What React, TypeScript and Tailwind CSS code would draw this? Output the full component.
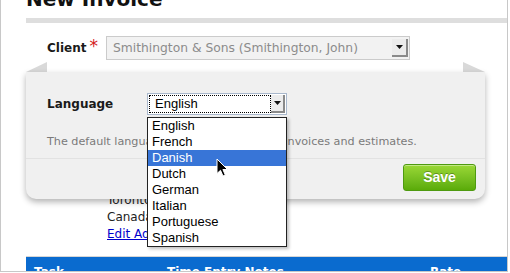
import React from "react";

const languages = ["English", "French", "Danish", "Dutch", "German", "Italian", "Portuguese", "Spanish"];

const SelectArrow = ({ className }: { className: string }) => (
  <div className={className}>
    <svg width="7" height="4" viewBox="0 0 7 4">
      <polygon points="0,0 7,0 3.5,4" fill="#111" />
    </svg>
  </div>
);

const Cursor = () => (
  <svg className="absolute left-[69px] top-[65px] z-30" width="13" height="20" viewBox="0 0 13 20">
    <path d="M1 1 L1 15.5 L4.5 12.3 L7 18 L9.3 17 L6.9 11.5 L11.5 11.5 Z" fill="#000" stroke="#fff" strokeWidth="1" strokeLinejoin="round" />
  </svg>
);

export default function App() {
  return (
    <div className="w-[510px] h-[273px] overflow-hidden bg-white font-['DejaVu_Sans',sans-serif]">
      <div className="relative w-[508px] h-[272px] overflow-hidden border-x border-b border-[#c8c8c8] pl-[25px]">
        <h1 className="mt-[-13px] text-[20px] leading-[24px] font-bold text-[#111]">New Invoice</h1>
        <div className="mt-[7px] h-[5px] bg-[#dedede]" />

        {/* client */}
        <div className="ml-[21px] mt-[13px] flex h-[24px] items-center">
          <div className="flex w-[59px] items-start">
            <span className="text-[12px] font-bold text-[#1a1a1a]">Client</span>
            <span className="ml-[3px] mt-[-1px] text-[17px] leading-[17px] text-[#d42020]">*</span>
          </div>
          <div className="flex h-[24px] w-[304px] items-center border border-[#cbcbcb] bg-[#f2f2f2] pl-[6px] text-[12.3px] text-[#8c8c8c]">
            <span>Smithington &amp; Sons (Smithington, John)</span>
            <SelectArrow className="ml-auto mr-[1px] flex h-[18px] w-[16px] items-center justify-center border-r-2 border-b-2 border-[#8a8a8a] bg-[#ececec]" />
          </div>
        </div>

        {/* folded corners */}
        <div className="mt-[2px] flex h-[10px] w-[459px] justify-between">
          <svg width="21" height="10" viewBox="0 0 21 10">
            <polygon points="0,10 21,0 21,10" fill="#d9d9d9" />
          </svg>
          <svg width="22" height="10" viewBox="0 0 22 10">
            <polygon points="0,0 22,10 0,10" fill="#d9d9d9" />
          </svg>
        </div>

        {/* settings panel */}
        <div className="relative z-10 w-[459px] rounded-b-[10px] bg-[#f0f0f0] shadow-[0_3px_6px_rgba(0,0,0,0.3)]">
          <div className="px-[21px] pt-[21px] pb-[9px]">
            <div className="flex items-center">
              <span className="w-[100px] text-[12px] font-bold text-[#1a1a1a]">Language</span>
              <div className="relative h-[22px] w-[140px]">
                <div className="flex h-[22px] items-center border border-[#a9b8cc] bg-white p-[1px]">
                  <div className="flex h-[18px] flex-1 items-center border border-dotted border-black pl-[5px] font-['Liberation_Sans',sans-serif] text-[13px] text-black">
                    English
                  </div>
                  <SelectArrow className="flex h-[18px] w-[14px] items-center justify-center border-r-2 border-b-2 border-[#8a8a8a] bg-[#ececec]" />
                </div>

                {/* open list */}
                <div className="absolute left-0 top-[24px] z-20 w-[140px] border border-[#222] bg-white shadow-[2px_2px_3px_rgba(0,0,0,0.25)] font-['Liberation_Sans',sans-serif] text-[13px]">
                  {languages.map((lang) => (
                    <div
                      key={lang}
                      className={
                        lang === "Danish"
                          ? "h-[16px] bg-[#3875d7] pl-[4px] leading-[16px] text-white"
                          : "h-[16px] pl-[4px] leading-[16px] text-black"
                      }
                    >
                      {lang}
                    </div>
                  ))}
                </div>
                <Cursor />
              </div>
            </div>
            <p className="mt-[20px] whitespace-nowrap text-[11.2px] leading-[14px] text-[#7a7a7a]">
              The default language used for the client&apos;s invoices and estimates.
            </p>
          </div>
          <div className="flex justify-end border-t border-[#e2e2e2] pt-[5px] pr-[9px] pb-[8px]">
            <button className="h-[27px] w-[73px] rounded-[3px] border border-[#4e9a10] bg-gradient-to-b from-[#9ad836] to-[#5aab08] font-['Liberation_Sans',sans-serif] text-[14px] font-bold text-white shadow-[inset_0_1px_0_rgba(255,255,255,0.4)] [text-shadow:0_-1px_0_rgba(0,0,0,0.3)]">
              Save
            </button>
          </div>
        </div>

        {/* address behind panel */}
        <div className="ml-[81px] mt-[-7px] text-[12px] leading-[17px] text-[#222]">
          <div>Toronto</div>
          <div>Canada</div>
          <a href="#" className="text-[#0000cc] underline">Edit Address</a>
        </div>

        {/* table header */}
        <div className="mt-[13px] flex h-[20px] border-t border-[#d6d6d6] bg-[#0a6bcf] pt-[6px] text-[12px] font-bold text-white">
          <span className="w-[141px] pl-[8px]">Task</span>
          <span className="w-[263px]">Time Entry Notes</span>
          <span>Rate</span>
        </div>
      </div>
    </div>
  );
}
